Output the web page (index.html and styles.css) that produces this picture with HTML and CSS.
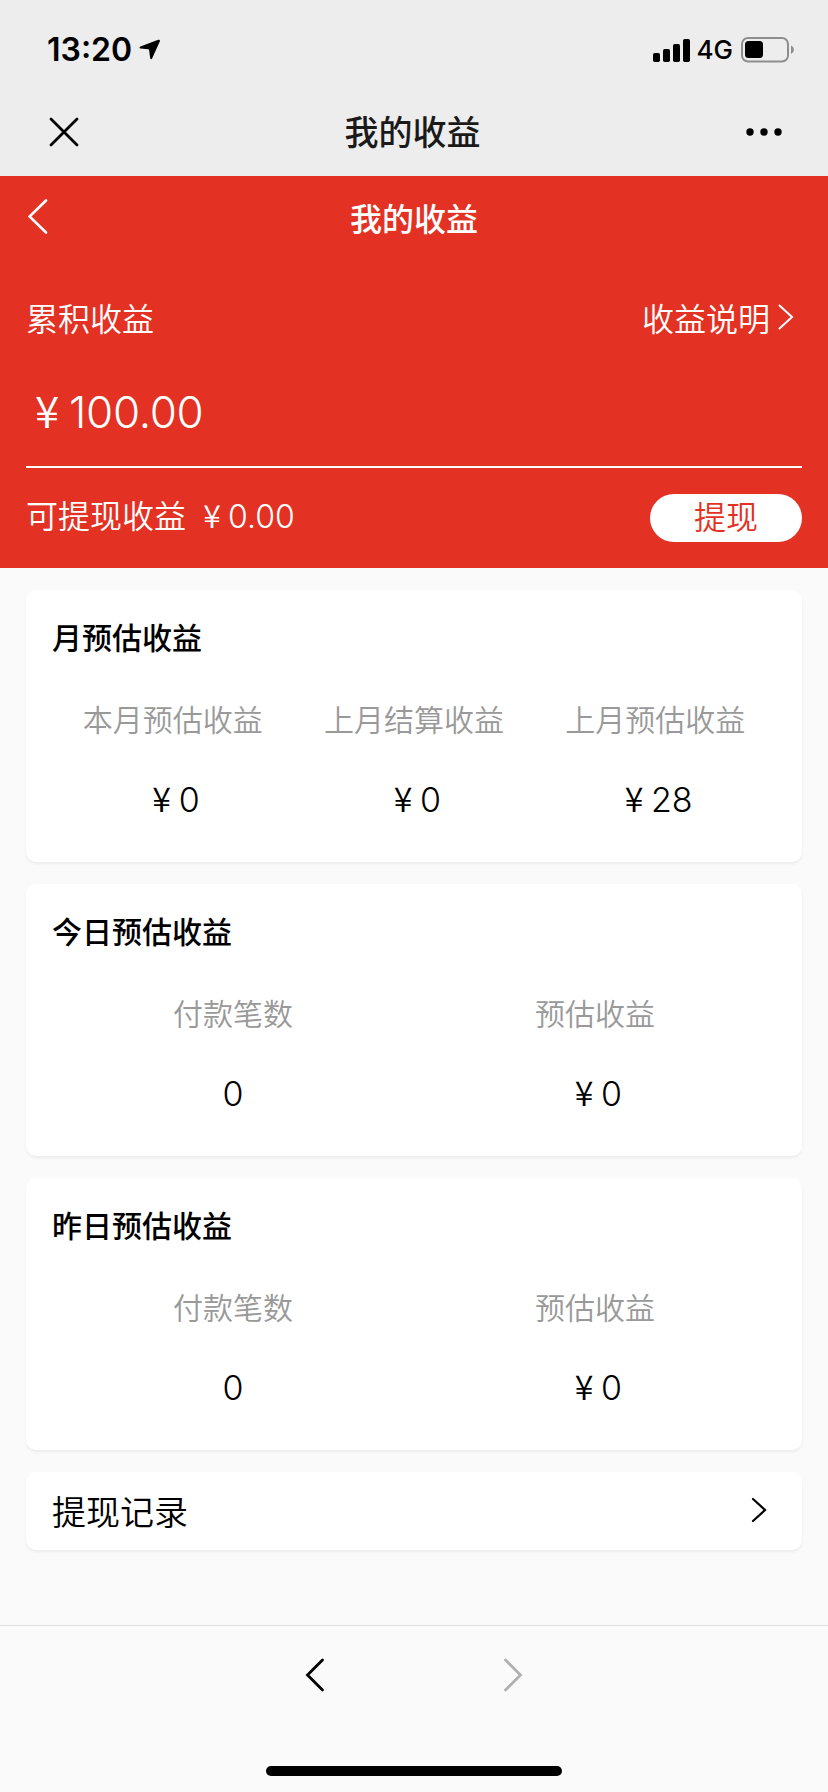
FILE: index.html
```html
<!DOCTYPE html>
<html lang="zh-CN">
<head>
<meta charset="utf-8">
<title>我的收益</title>
<link rel="stylesheet" href="styles.css">
</head>
<body>
<div class="screen">
  <header class="chrome">
    <div class="status">
      <div class="status-left">
        <span class="time">13:20</span>
        <svg class="location" width="22" height="22" viewBox="0 0 22 22"><path d="M19.300.8 1.400 7.500C.2 8 .3 9.300 1.500 9.500L9.200 10.200Q10 10.300 10.100 11.200L11.200 19.200C11.400 20.500 12.600 20.500 13.100 19.500L20.900 2.200C21.300 1 20.400.4 19.300.8Z"/></svg>
      </div>
      <div class="status-right">
        <svg class="signal" width="37" height="23" viewBox="0 0 37 23"><rect x="0" y="14" width="7" height="9" rx="1.800"/><rect x="10" y="10" width="7" height="13" rx="1.800"/><rect x="20" y="5" width="7" height="18" rx="1.800"/><rect x="30" y="0" width="7" height="23" rx="1.800"/></svg>
        <span class="network">4G</span>
        <svg class="battery" width="54" height="26" viewBox="0 0 54 26"><rect x="1" y="1" width="46" height="23.500" rx="6" fill="none" stroke="#8e8e8e" stroke-width="2"/><rect x="4" y="4" width="18" height="17" rx="3.500"/><path d="M50 8.500q3 1.500 3 4.200t-3 4.200z" fill="#8e8e8e"/></svg>
      </div>
    </div>
    <div class="nav">
      <svg class="close" width="30" height="30" viewBox="0 0 30 30"><path d="M2 2 28 28M28 2 2 28"/></svg>
      <h1 class="nav-title">我的收益</h1>
      <svg class="more" width="36" height="8" viewBox="0 0 36 8"><circle cx="4" cy="4" r="3.700"/><circle cx="18" cy="4" r="3.700"/><circle cx="32" cy="4" r="3.700"/></svg>
    </div>
  </header>

  <section class="hero">
    <div class="hero-bar">
      <svg class="hero-back" width="20" height="36" viewBox="0 0 20 36"><path d="M18 2.500 1.500 18.500 18 34.500"/></svg>
      <h2 class="hero-title">我的收益</h2>
    </div>
    <div class="hero-row">
      <span>累积收益</span>
      <a class="explain">收益说明<svg width="16" height="26" viewBox="0 0 16 26"><path d="M1.500 1.500 14 13 1.500 24.500"/></svg></a>
    </div>
    <div class="total"><span class="yen">¥</span>100.00</div>
    <div class="withdraw">
      <div class="available">可提现收益<span class="available-sum"><span class="yen">¥</span>0.00</span></div>
      <button class="withdraw-btn">提现</button>
    </div>
  </section>

  <main class="cards">
    <section class="card">
      <h3 class="card-title">月预估收益</h3>
      <div class="stats">
        <div class="stat"><span class="label">本月预估收益</span><span class="value"><span class="yen">¥</span>0</span></div>
        <div class="stat"><span class="label">上月结算收益</span><span class="value"><span class="yen">¥</span>0</span></div>
        <div class="stat"><span class="label">上月预估收益</span><span class="value"><span class="yen">¥</span>28</span></div>
      </div>
    </section>
    <section class="card">
      <h3 class="card-title">今日预估收益</h3>
      <div class="stats">
        <div class="stat"><span class="label">付款笔数</span><span class="value">0</span></div>
        <div class="stat"><span class="label">预估收益</span><span class="value"><span class="yen">¥</span>0</span></div>
      </div>
    </section>
    <section class="card">
      <h3 class="card-title">昨日预估收益</h3>
      <div class="stats">
        <div class="stat"><span class="label">付款笔数</span><span class="value">0</span></div>
        <div class="stat"><span class="label">预估收益</span><span class="value"><span class="yen">¥</span>0</span></div>
      </div>
    </section>
    <a class="card record">
      <span>提现记录</span>
      <svg width="16" height="26" viewBox="0 0 16 26"><path d="M2 2 14 13 2 24"/></svg>
    </a>
  </main>

  <footer class="toolbar">
    <div class="history">
      <svg width="20" height="36" viewBox="0 0 20 36"><path d="M17.500 3 2.500 18 17.500 33"/></svg>
      <svg class="disabled" width="20" height="36" viewBox="0 0 20 36"><path d="M2.500 3 17.500 18 2.500 33"/></svg>
    </div>
    <div class="home"></div>
  </footer>
</div>
</body>
</html>
```
FILE: styles.css
```css
* { box-sizing: border-box; }
body {
  margin: 0;
  background: #fafafa;
  color: #000;
  font-family: Inter, "Noto Sans CJK SC", sans-serif;
}
h1, h2, h3 { margin: 0; }
svg { display: block; flex: none; }
.screen {
  width: 828px;
  height: 1792px;
  display: flex;
  flex-direction: column;
  overflow: hidden;
}

.chrome { height: 176px; background: #ededed; }
.status {
  height: 88px;
  padding: 12px 33px 0 47px;
  display: flex;
  justify-content: space-between;
  align-items: center;
}
.status-left, .status-right { display: flex; align-items: center; }
.time { font-size: 32px; font-weight: 600; line-height: 40px; }
.location { margin-left: 7px; }
.network { margin: 0 8px 0 7px; font-size: 26px; font-weight: 500; line-height: 32px; }
.nav {
  height: 88px;
  padding: 0 52px 0 49px;
  display: grid;
  grid-template-columns: 1fr auto 1fr;
  align-items: center;
}
.close { fill: none; stroke: #000; stroke-width: 2.800; stroke-linecap: round; }
.nav-title { padding-top: 2px; font-size: 34px; font-weight: 500; line-height: 44px; color: #1a1a1a; }
.more { justify-self: end; margin-right: -6px; }

.hero {
  height: 392px;
  padding: 0 26px;
  background: #e33224;
  color: #fff;
  font-size: 32px;
  font-weight: 350;
}
.hero-bar {
  height: 84px;
  display: grid;
  grid-template-columns: 1fr auto 1fr;
  align-items: center;
}
.hero-back { margin: -4px 0 0 2px; fill: none; stroke: #fff; stroke-width: 2.600; stroke-linecap: round; }
.hero-title { padding-top: 3px; font-size: 32px; font-weight: 500; line-height: 44px; }
.hero-row {
  height: 116px;
  padding: 0 8px 3px 0;
  display: flex;
  justify-content: space-between;
  align-items: center;
}
.explain { display: flex; align-items: center; gap: 8px; }
.explain svg { fill: none; stroke: #fff; stroke-width: 2; stroke-linecap: round; }
.total { height: 92px; padding-top: 6px; font-size: 44px; line-height: 60px; letter-spacing: -.3px; font-weight: 300; border-bottom: 2px solid #fff; }
.yen {
  display: inline-block;
  width: 1em;
  margin-left: -1px;
  line-height: 1;
  text-align: center;
  font-family: "Noto Sans CJK SC", sans-serif;
  font-weight: 350;
}
.withdraw { height: 100px; padding-bottom: 1px; display: flex; justify-content: space-between; align-items: center; }
.available { line-height: 44px; padding-bottom: 1px; }
.available-sum { margin-left: 11px; font-weight: 300; }
.withdraw-btn {
  width: 152px;
  height: 48px;
  padding: 0;
  border: 0;
  border-radius: 24px;
  background: #fff;
  color: #e33224;
  font: inherit;
  line-height: 46px;
}

.cards { flex: 1; padding: 22px 26px 0; display: flex; flex-direction: column; gap: 22px; }
.card {
  height: 272px;
  padding: 26px;
  border-radius: 10px;
  background: #fff;
  box-shadow: 0 2px 3px rgba(0, 0, 0, .06);
}
.card-title { font-size: 30px; font-weight: 500; line-height: 44px; }
.stats { display: flex; margin-top: 38px; }
.stat { flex: 1; display: flex; flex-direction: column; align-items: center; gap: 36px; }
.label { font-size: 30px; font-weight: 350; line-height: 44px; color: #999; }
.value { font-size: 34px; line-height: 44px; font-weight: 350; }
.record {
  height: 78px;
  display: flex;
  justify-content: space-between;
  align-items: center;
  padding: 0 35px 2px 26px;
  font-size: 34px;
  font-weight: 350;
}
.record svg { fill: none; stroke: #000; stroke-width: 2.200; stroke-linecap: round; }

.toolbar {
  height: 167px;
  border-top: 1px solid #dedede;
  padding: 31px 0 16px;
  display: flex;
  flex-direction: column;
  justify-content: space-between;
  align-items: center;
}
.history { display: flex; gap: 178px; }
.history svg { fill: none; stroke: #000; stroke-width: 2.800; stroke-linecap: round; }
.history .disabled { stroke: #b0b0b0; }
.home { width: 296px; height: 10px; border-radius: 5px; background: #000; }
```
